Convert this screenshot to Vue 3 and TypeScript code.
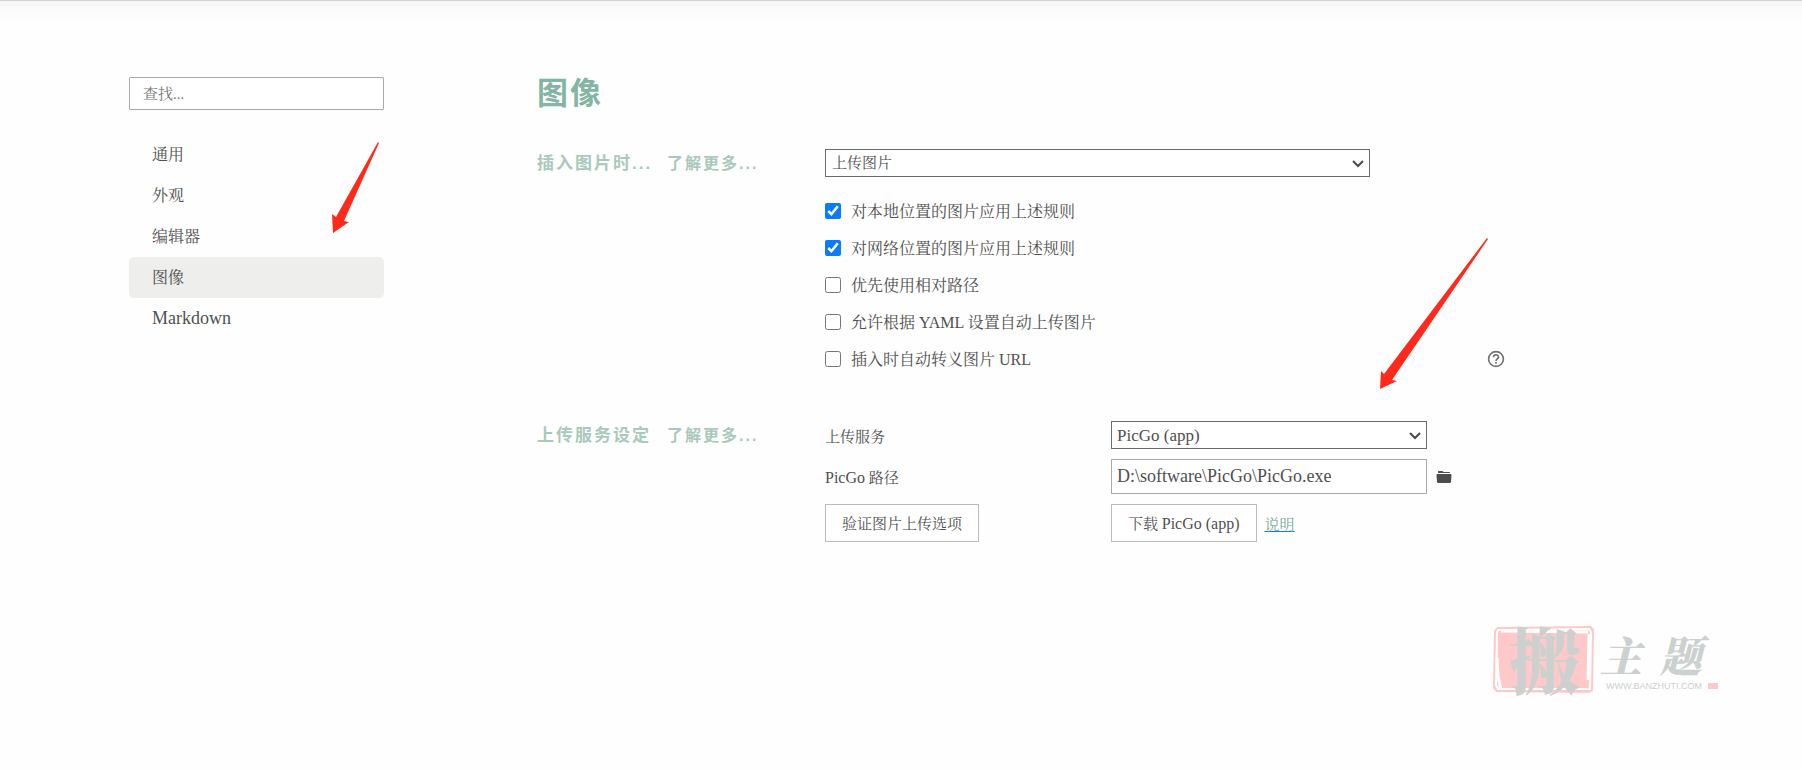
<script setup lang="ts">
import { ref } from 'vue'

interface Rule {
  id: string
  label: string
  checked: boolean
  help?: boolean
}

const sections = ['通用', '外观', '编辑器', '图像', 'Markdown']
const current = ref('图像')
const query = ref('')
const insertAction = ref('上传图片')
const service = ref('PicGo (app)')
const picgoPath = ref('D:\\software\\PicGo\\PicGo.exe')

const rules = ref<Rule[]>([
  { id: 'local', label: '对本地位置的图片应用上述规则', checked: true },
  { id: 'online', label: '对网络位置的图片应用上述规则', checked: true },
  { id: 'relative', label: '优先使用相对路径', checked: false },
  { id: 'yaml', label: '允许根据 YAML 设置自动上传图片', checked: false },
  { id: 'escape', label: '插入时自动转义图片 URL', checked: false, help: true },
])
</script>

<template>
  <div class="page">
    <aside class="sidebar">
      <input v-model="query" class="search" type="text" placeholder="查找..." aria-label="查找" />
      <nav class="nav">
        <button
          v-for="name in sections"
          :key="name"
          type="button"
          class="nav-item"
          :class="{ active: name === current, latin: name === 'Markdown' }"
          @click="current = name"
        >
          {{ name }}
        </button>
      </nav>
      <svg class="arrow arrow-nav" width="48" height="92" viewBox="0 0 48 92" aria-hidden="true">
        <path d="M46 0L47 1L12 79L17 80L1 91L0 72L4 75Z" fill="#ff2a1c" />
      </svg>
    </aside>

    <main class="content">
      <h1 class="title">图像</h1>

      <section class="row">
        <h2 class="heading">
          <span class="heading-name">插入图片时...</span>
          <a href="#insert" class="more">了解更多...</a>
        </h2>
        <div>
          <div class="select-box action">
            <select v-model="insertAction" class="select" aria-label="插入图片时">
              <option>上传图片</option>
            </select>
            <svg class="chevron" width="12" height="8" viewBox="0 0 12 8" aria-hidden="true">
              <path d="M1 1L6 6L11 1" fill="none" stroke="#4a4a4a" stroke-width="2" />
            </svg>
          </div>
          <ul class="rules">
            <li v-for="rule in rules" :key="rule.id" class="rule">
              <input :id="rule.id" v-model="rule.checked" type="checkbox" class="check" />
              <label :for="rule.id">{{ rule.label }}</label>
              <button v-if="rule.help" type="button" class="icon-button help" aria-label="帮助">
                <svg width="18" height="18" viewBox="0 0 18 18" aria-hidden="true">
                  <circle cx="9" cy="9" r="7.4" fill="none" stroke="#707070" stroke-width="1.6" />
                  <path
                    d="M6.5 7.3C6.5 3.8 11.6 4 11.5 7.1C11.4 8.8 9 8.9 9 11"
                    fill="none"
                    stroke="#707070"
                    stroke-width="1.6"
                  />
                  <path d="M8.2 12.1h1.6v1.6H8.2z" fill="#707070" />
                </svg>
              </button>
            </li>
          </ul>
        </div>
      </section>

      <section class="row">
        <h2 class="heading">
          <span class="heading-name">上传服务设定</span>
          <a href="#upload" class="more">了解更多...</a>
        </h2>
        <div class="service">
          <label for="service">上传服务</label>
          <div class="select-box">
            <select id="service" v-model="service" class="select latin-field">
              <option>PicGo (app)</option>
            </select>
            <svg class="chevron" width="12" height="8" viewBox="0 0 12 8" aria-hidden="true">
              <path d="M1 1L6 6L11 1" fill="none" stroke="#4a4a4a" stroke-width="2" />
            </svg>
          </div>
          <span></span>

          <label for="picgo-path"><span class="latin-text">PicGo</span> 路径</label>
          <input id="picgo-path" v-model="picgoPath" class="path" type="text" />
          <button type="button" class="icon-button folder" aria-label="浏览">
            <svg width="16" height="14" viewBox="0 0 16 14" aria-hidden="true">
              <path d="M2 1.5Q2 1 2.5 1H6.5L7.5 2H13.5Q14 2 14 2.5V3H2Z" fill="#4d4d4d" />
              <path d="M1.2 4H14.8Q15.6 4 15.5 5L15 12Q15 13 14 13H2Q1 13 1 12L.5 5Q.4 4 1.2 4Z" fill="#4d4d4d" />
            </svg>
          </button>

          <div><button type="button" class="button">验证图片上传选项</button></div>
          <div class="download">
            <button type="button" class="button">下载 <span class="latin-text">PicGo (app)</span></button>
            <a href="#guide" class="guide">说明</a>
          </div>
        </div>
      </section>

      <svg class="arrow arrow-service" width="109" height="152" viewBox="0 0 109 152" aria-hidden="true">
        <path d="M107 0L108 1L12 142L17 143L0 151L1 133L4 136Z" fill="#ff2a1c" />
      </svg>
    </main>

    <div class="watermark">
      <div class="seal">
        <svg class="seal-frame" width="102" height="68" viewBox="0 0 102 68" aria-hidden="true">
          <path d="M4 1L98 0L101 3L100 65L96 67L3 66L0 62L1 5Z" fill="#ffc9c9" />
          <path d="M5 4L96 3L98 6L97 63L5 63L3 59L4 7Z" fill="none" stroke="#fff" stroke-width="2" />
          <path d="M8 5L95 6M4 32L5 50L8 64M96 8L95 54" fill="none" stroke="#fff" stroke-width="3" />
        </svg>
        <span class="seal-text">搬</span>
      </div>
      <div class="brand">
        <div class="brand-name">主题</div>
        <div class="brand-url">WWW.BANZHUTI.COM<i class="brand-mark"></i></div>
      </div>
    </div>
  </div>
</template>

<style>
body {
  margin: 0;
  background: #fefefe;
}
</style>

<style scoped>
* {
  box-sizing: border-box;
}

.page {
  position: relative;
  display: grid;
  grid-template-columns: 129fr 255fr 153fr 972fr 293fr;
  align-items: start;
  min-height: 100vh;
  padding-top: 76px;
  border-top: 1px solid #d4d4d4;
  background: linear-gradient(#f4f4f4, #fbfbfb 8px, #fefefe 26px);
  color: #505050;
  font-family: 'Liberation Serif', 'Noto Serif CJK SC', 'Noto Sans CJK SC', serif;
  font-size: 15px;
  font-weight: 400;
}

button,
input,
select {
  color: inherit;
  font: inherit;
}

.sidebar {
  position: relative;
  grid-column: 2;
}

.search {
  display: block;
  width: 100%;
  height: 33px;
  padding: 1px 13px 0;
  border: 1px solid #aaa;
  border-radius: 1px;
  background: #fff;
}

.search::placeholder {
  color: #777;
}

.nav {
  display: flex;
  flex-direction: column;
  margin-top: 24px;
}

.nav-item {
  height: 41px;
  padding: 0 23px 2px;
  border: 0;
  border-radius: 5px;
  background: transparent;
  font-size: 16px;
  text-align: left;
}

.nav-item.active {
  background: #eeeeec;
}

.nav-item.latin {
  padding-bottom: 0;
  font-size: 18px;
}

.content {
  position: relative;
  grid-column: 4;
}

.title {
  margin: 0 0 44px;
  color: #84b4a4;
  font-family: 'Noto Sans CJK SC', sans-serif;
  font-size: 31px;
  font-weight: 700;
  line-height: 28px;
  letter-spacing: 2px;
}

.row {
  display: grid;
  grid-template-columns: 288fr 684fr;
  align-items: start;
}

.heading {
  display: flex;
  margin: 0;
  color: #a9c9bb;
  font-family: 'Liberation Sans', 'Noto Sans CJK SC', sans-serif;
  font-size: 17px;
  font-weight: 700;
  line-height: 30px;
  letter-spacing: 2px;
  white-space: nowrap;
}

.heading-name {
  min-width: 130px;
}

.more {
  color: inherit;
  font-size: 16px;
  text-decoration: none;
}

.select-box {
  position: relative;
}

.action {
  width: calc(80% - 2px);
}

.select {
  display: block;
  width: 100%;
  height: 28px;
  padding: 0 24px 0 6px;
  border: 1px solid #6a6a6a;
  border-radius: 0;
  background: #fff;
  appearance: none;
}

.chevron {
  position: absolute;
  top: 11px;
  right: 6px;
  pointer-events: none;
}

.rules {
  margin: 15px 0 44px;
  padding: 0;
  list-style: none;
}

.rule {
  display: flex;
  align-items: center;
  height: 37px;
  font-size: 16px;
}

.check {
  width: 16px;
  height: 16px;
  margin: 0 10px 0 0;
  accent-color: #0a7aff;
}

.icon-button {
  display: flex;
  padding: 0;
  border: 0;
  background: transparent;
}

.help {
  margin-left: auto;
  margin-right: 4px;
}

.service {
  display: grid;
  grid-template-columns: 286fr 316fr 82fr;
  grid-template-rows: 28px 35px 38px;
  row-gap: 10px;
  align-items: center;
}

.latin-field {
  padding-left: 5px;
  font-size: 17px;
}

.latin-text {
  font-size: 16px;
}

.path {
  width: 100%;
  height: 35px;
  padding: 0 5px;
  border: 1px solid #aaa;
  background: #fff;
  font-size: 18px;
}

.folder {
  margin-left: 9px;
}

.button {
  height: 38px;
  padding: 0 16px 2px;
  border: 1px solid #bbb;
  background: #fff;
  white-space: nowrap;
}

.download {
  display: flex;
  align-items: center;
  gap: 8px;
}

.guide {
  color: #77aa99;
  text-decoration-color: #0a7aff;
}

.arrow {
  position: absolute;
  pointer-events: none;
}

.arrow-nav {
  top: 65px;
  right: 4px;
}

.arrow-service {
  top: 161px;
  right: 20px;
}

.watermark {
  position: absolute;
  right: 82px;
  bottom: 74px;
  display: flex;
  color: #ccd1cf;
  font-family: 'Noto Serif CJK SC', 'Noto Sans CJK SC', serif;
}

.seal {
  position: relative;
  width: 104px;
  height: 68px;
  margin-right: 3px;
}

.seal-frame {
  position: absolute;
  top: 0;
  left: 0;
}

.seal-text {
  position: relative;
  display: block;
  font-size: 72px;
  font-weight: 900;
  line-height: 62px;
  text-align: center;
}

.brand-name {
  height: 51px;
  padding-top: 7px;
  font-size: 42px;
  font-style: italic;
  font-weight: 900;
  line-height: 42px;
  letter-spacing: 18px;
}

.brand-url {
  display: flex;
  align-items: center;
  gap: 6px;
  margin-left: 6px;
  font-family: 'Liberation Sans', sans-serif;
  font-size: 9px;
  font-weight: 400;
  line-height: 18px;
}

.brand-mark {
  width: 10px;
  height: 6px;
  background: #ffc9c9;
}
</style>
